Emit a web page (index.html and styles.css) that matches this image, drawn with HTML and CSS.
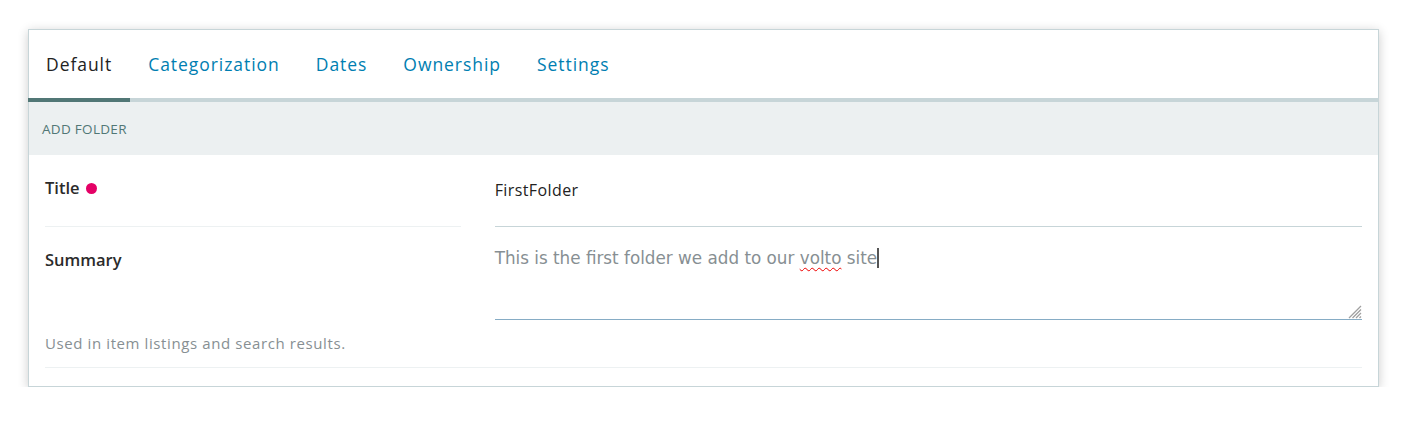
FILE: index.html
```html
<!DOCTYPE html>
<html lang="en">
<head>
<meta charset="utf-8">
<title>Add Folder</title>
<link rel="stylesheet" href="styles.css">
</head>
<body>
<div class="page">
  <div class="card">
    <nav class="tabs">
      <a class="tab active">Default</a>
      <a class="tab">Categorization</a>
      <a class="tab">Dates</a>
      <a class="tab">Ownership</a>
      <a class="tab">Settings</a>
    </nav>
    <div class="segment-header">Add Folder</div>
    <div class="field row-title">
      <div class="cell label-cell">
        <div class="label-wrap">
          <label class="label">Title <span class="required"></span></label>
        </div>
      </div>
      <div class="cell input-cell">
        <div class="input">FirstFolder</div>
      </div>
    </div>
    <div class="field row-summary">
      <div class="cell">
        <label class="label">Summary</label>
      </div>
      <div class="cell">
        <div class="textarea">This is the first folder we add to our <span class="misspelled">volto</span> site<span class="caret"></span>
          <svg class="grip" width="14" height="14" viewBox="0 0 14 14">
            <path d="M13 1 L1 13 M13 4.5 L4.5 13 M13 8 L8 13 M13 11.5 L11.5 13" stroke="#a0a0a0" stroke-width="1.3" fill="none"/>
          </svg>
        </div>
      </div>
    </div>
    <div class="help-row">
      <div class="help">Used in item listings and search results.</div>
    </div>
  </div>
</div>
</body>
</html>
```
FILE: styles.css
```css
* { box-sizing: border-box; }
html, body { margin: 0; padding: 0; background: #fff; }
body {
  font-family: "Open Sans", "Liberation Sans", sans-serif;
  color: #333;
}
.page {
  padding: 29px 0 0 28px;
}
.card {
  width: 1351px;
  border: 1px solid #c7d5d8;
  background: #fff;
  box-shadow: 0 2px 10px rgba(0, 0, 0, 0.2);
  padding-bottom: 18px;
}
.tabs {
  display: flex;
  height: 72px;
  border-bottom: 4px solid #c7d5d8;
  margin-left: -1px;
}
.tab {
  display: flex;
  align-items: center;
  padding: 0 18px;
  margin-bottom: -4px;
  border-bottom: 4px solid transparent;
  font-size: 17.5px;
  letter-spacing: 0.95px;
  color: #007eb1;
  cursor: pointer;
}
.tab.active {
  color: #222;
  border-bottom-color: #517776;
}
.segment-header {
  height: 53px;
  display: flex;
  align-items: center;
  padding: 0 13px;
  background: #ecf0f1;
  color: #517776;
  font-size: 13.5px;
  letter-spacing: 0.3px;
  text-transform: uppercase;
}
.field {
  display: grid;
  grid-template-columns: 1fr 2fr;
}
.cell {
  padding: 0 16px;
}
.label {
  display: flex;
  align-items: center;
  font-size: 16.5px;
  font-weight: 600;
  line-height: 20px;
  color: #2b2b2b;
  padding-top: 23px;
}
.required {
  display: inline-block;
  width: 11px;
  height: 11px;
  margin-left: 6px;
  border-radius: 50%;
  background: #e40166;
}
.label-wrap {
  height: 72px;
  border-bottom: 1px solid #edf1f2;
}
.row-title .label-cell { padding-right: 18px; }
.input {
  height: 72px;
  padding-top: 25px;
  line-height: 20px;
  font-size: 16px;
  letter-spacing: 0.4px;
  color: #222;
  border-bottom: 1px solid #c7d5d8;
}
.textarea {
  position: relative;
  margin-top: 13px;
  height: 80px;
  padding-top: 8px;
  font-family: "DejaVu Sans", sans-serif;
  font-size: 16.8px;
  line-height: 20px;
  color: #878f93;
  border-bottom: 1px solid #86acc5;
}
.misspelled {
  text-decoration: underline wavy #e00;
  text-decoration-thickness: 1px;
  text-underline-offset: 3px;
}
.caret {
  display: inline-block;
  width: 2px;
  height: 20px;
  vertical-align: -4px;
  background: #555;
}
.grip {
  position: absolute;
  right: 0;
  bottom: 0;
}
.help-row {
  padding: 0 16px;
}
.help {
  padding: 14px 0 15px;
  line-height: 18px;
  font-size: 15px;
  letter-spacing: 0.6px;
  color: #878f93;
  border-bottom: 1px solid #edf1f2;
}
```
